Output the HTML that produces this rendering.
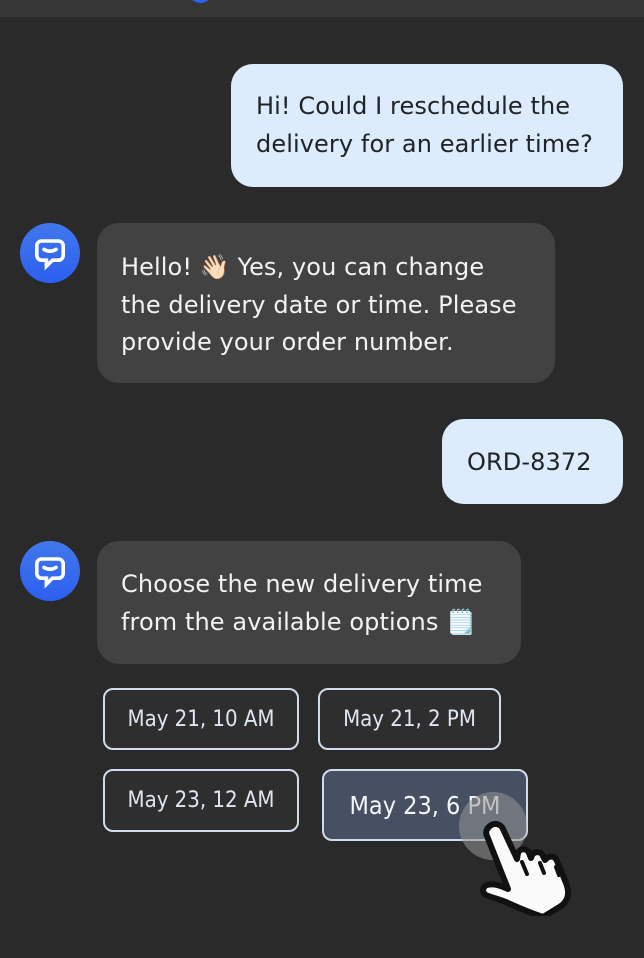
<!DOCTYPE html>
<html><head><meta charset="utf-8"><style>
body{margin:0;width:644px;height:958px;background:#2a2a2a;position:relative;overflow:hidden;font-family:"DejaVu Sans","Liberation Sans","Noto Sans CJK JP",sans-serif;}
.top{position:absolute;left:0;top:0;width:644px;height:17px;background:#363636;}
.dot{position:absolute;left:188px;top:-22px;width:25px;height:25px;border-radius:50%;background:#2f5fef;}
.b{position:absolute;box-sizing:border-box;font-size:24px;line-height:37.5px;letter-spacing:0.1px;}
.u{background:#dcecfc;color:#202428;border-radius:22px;}
.k{background:#424242;color:#f2f2f2;border-radius:22px;}
.av{position:absolute;width:60px;height:60px;border-radius:50%;background:linear-gradient(#4178ec,#2c5ff0);}
.av svg{position:absolute;left:12px;top:12px;}
.btn{position:absolute;box-sizing:border-box;border:2px solid #d0dcec;border-radius:10px;background:#2e2e2e;color:#dfe6f0;font-size:22px;display:flex;align-items:center;justify-content:center;font-family:"DejaVu Sans Condensed","Liberation Sans",sans-serif;}
</style></head><body>
<div class="top"><div class="dot"></div></div>

<div class="b u" style="left:231px;top:64px;width:392px;height:123px;padding:24px 0 0 25px;">Hi! Could I reschedule the<br>delivery for an earlier time?</div>

<div class="av" style="left:20px;top:223px;"><svg width="36" height="36" viewBox="0 0 30 30"><path d="M8 5h14a4 4 0 0 1 4 4v8a4 4 0 0 1-4 4h-5l-5 5v-5H8a4 4 0 0 1-4-4V9a4 4 0 0 1 4-4z" fill="none" stroke="#fff" stroke-width="3"/><path d="M10 12q5 3 10 0" fill="none" stroke="#fff" stroke-width="3" stroke-linecap="round"/></svg></div>
<div class="b k" style="left:97px;top:223px;width:458px;height:160px;padding:26px 0 0 24px;">Hello! 👋🏻 Yes, you can change<br>the delivery date or time. Please<br>provide your order number.</div>

<div class="b u" style="left:442px;top:419px;width:181px;height:85px;padding:25px 0 0 25px;">ORD-8372</div>

<div class="av" style="left:20px;top:541px;"><svg width="36" height="36" viewBox="0 0 30 30"><path d="M8 5h14a4 4 0 0 1 4 4v8a4 4 0 0 1-4 4h-5l-5 5v-5H8a4 4 0 0 1-4-4V9a4 4 0 0 1 4-4z" fill="none" stroke="#fff" stroke-width="3"/><path d="M10 12q5 3 10 0" fill="none" stroke="#fff" stroke-width="3" stroke-linecap="round"/></svg></div>
<div class="b k" style="left:97px;top:541px;width:424px;height:123px;padding:25px 0 0 24px;">Choose the new delivery time<br>from the available options 🗒️</div>

<div class="btn" style="left:103px;top:688px;width:196px;height:62px;">May 21, 10 AM</div>
<div class="btn" style="left:318px;top:688px;width:183px;height:62px;">May 21, 2 PM</div>
<div class="btn" style="left:103px;top:769px;width:196px;height:63px;">May 23, 12 AM</div>
<div class="btn" style="left:322px;top:769px;width:206px;height:72px;background:#465062;color:#f4f6fa;font-size:25px;">May 23, 6 PM</div>

<div style="position:absolute;left:459px;top:792px;width:68px;height:68px;border-radius:50%;background:rgba(150,150,150,0.55);"></div>
<svg style="position:absolute;left:476px;top:816px;" width="110" height="100" viewBox="0 0 110 100">
<path d="M14 10c4-4 11-2 13 3l14 30 1-6c2-5 9-5 11 0l2 5 1-3c3-4 9-4 11 1l2 4 2-2c4-3 9-1 10 3l9 22c4 10 2 18-5 23l-18 11c-12-4-24-9-35-14-8-4-16-5-22-8-4-2-4-8 1-10 7-2 14 1 21 4L11 20c-2-4 0-8 3-10z" fill="#fafafa" stroke="#111" stroke-width="6" stroke-linejoin="round"/>
<path d="M46 46l5 12M64 47l4 10M80 51l3 8" stroke="#111" stroke-width="4" stroke-linecap="round"/>
</svg>
</body></html>
